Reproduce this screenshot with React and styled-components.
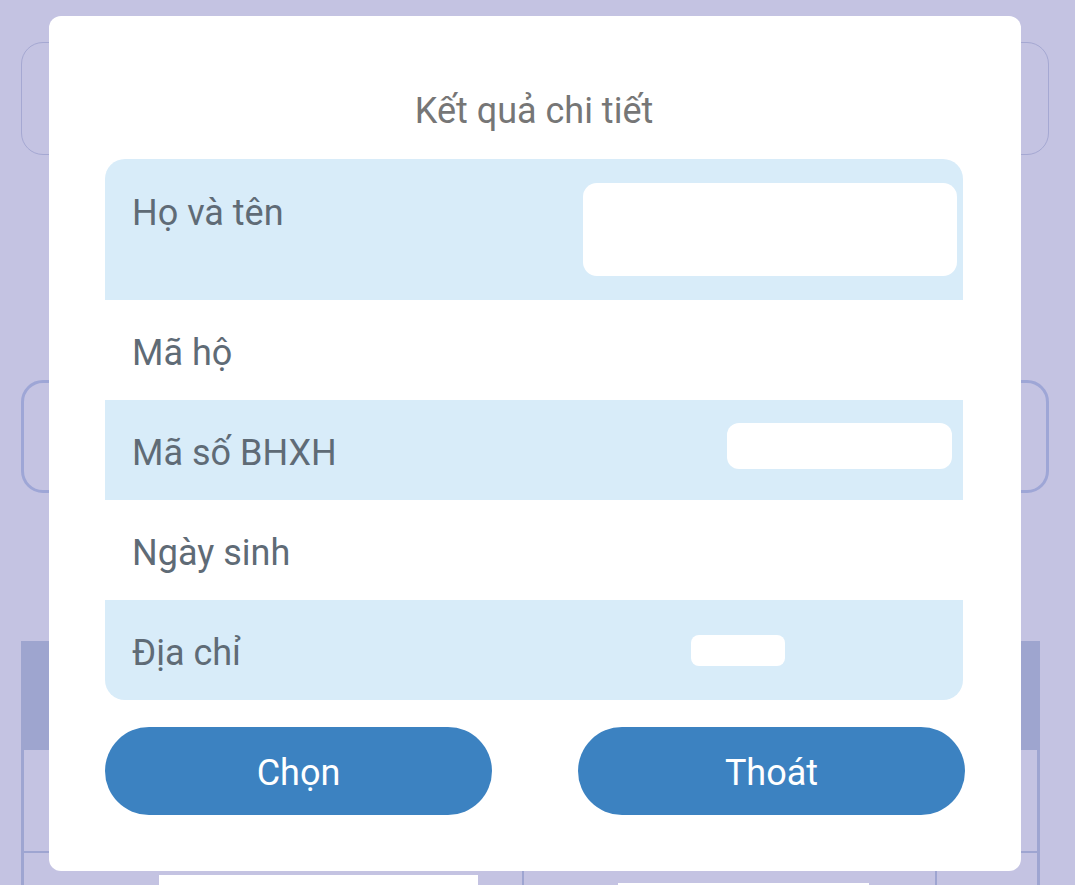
import React from "react";
import styled, { createGlobalStyle } from "styled-components";

const GlobalStyle = createGlobalStyle`
  html, body {
    margin: 0;
    padding: 0;
    background: #c4c3e2;
    font-family: Roboto, "Noto Sans", "Liberation Sans", sans-serif;
  }
  #root { position: relative; min-height: 885px; overflow: hidden; }
`;

const Backdrop = styled.div`
  display: flex;
  flex-direction: column;
  padding: 42px 26px 0 21px;
  height: 885px;
  box-sizing: border-box;
`;

const InfoCard = styled.div`
  flex-shrink: 0;
  height: 113px;
  box-sizing: border-box;
  border: ${(p) => (p.$thick ? "3px solid #9ea6d6" : "1px solid #a5a8d2")};
  border-radius: 22px;
  margin-bottom: ${(p) => p.$after}px;
`;

const BgTable = styled.div`
  flex-shrink: 0;
  display: flex;
  flex-direction: column;
  width: 1019px;
`;

const BgHead = styled.div`
  flex-shrink: 0;
  height: 109px;
  background: #9ea5cf;
`;

const BgRow = styled.div`
  flex-shrink: 0;
  display: grid;
  grid-template-columns: 500px 413px 1fr;
  height: ${(p) => p.$h}px;
  box-sizing: border-box;
  border-left: 3px solid #9ea5d1;
  border-right: 3px solid #9ea5d1;
  border-bottom: 2px solid #9ea5d1;
`;

const BgCell = styled.div`
  border-right: ${(p) => (p.$last ? "none" : "2px solid #9ea5d1")};
  padding: ${(p) => p.$pad || 0};
  box-sizing: border-box;
`;

const BgInput = styled.div`
  background: #fff;
  height: 40px;
  width: ${(p) => p.$w}px;
`;

const Modal = styled.div`
  position: absolute;
  top: 16px;
  left: 49px;
  width: 972px;
  height: 855px;
  box-sizing: border-box;
  background: #fff;
  border-radius: 12px;
  padding: 75px 58px 56px 56px;
  display: flex;
  flex-direction: column;
`;

const Title = styled.div`
  height: 40px;
  line-height: 40px;
  text-align: center;
  font-size: 36px;
  color: #767676;
  margin-bottom: 28px;
`;

const Table = styled.div`
  border-radius: 20px;
  overflow: hidden;
  display: flex;
  flex-direction: column;
`;

const Row = styled.div`
  display: flex;
  align-items: ${(p) => (p.$top ? "flex-start" : "center")};
  height: ${(p) => p.$h}px;
  background: ${(p) => (p.$shade ? "#d8ecf9" : "#ffffff")};
  padding: ${(p) => (p.$top ? "24px 6px 0 27px" : "0 0 0 27px")};
  box-sizing: border-box;
`;

const Label = styled.div`
  font-size: 36px;
  line-height: 42px;
  color: #5f6b76;
  margin-top: ${(p) => p.$mt || 0}px;
  padding-top: 6px;
  white-space: nowrap;
`;

const ValueBox = styled.div`
  margin-left: auto;
  width: ${(p) => p.$w}px;
  height: ${(p) => p.$h}px;
  margin-right: ${(p) => p.$mr || 0}px;
  margin-top: ${(p) => p.$mt || 0}px;
  background: #fff;
  border-radius: ${(p) => p.$r}px;
`;

const Actions = styled.div`
  display: flex;
  justify-content: space-between;
  margin-top: 27px;
  margin-right: -2px;
`;

const Button = styled.button`
  width: 387px;
  height: 88px;
  border: none;
  border-radius: 44px;
  background: #3c82c1;
  color: #fff;
  font-family: Roboto, "Noto Sans", "Liberation Sans", sans-serif;
  font-size: 36px;
  padding: 4px 0 0;
  cursor: pointer;
`;

export default function App() {
  return (
    <>
      <GlobalStyle />
      <Backdrop>
        <InfoCard $after={225} />
        <InfoCard $thick $after={148} />
        <BgTable>
          <BgHead />
          <BgRow $h={103}>
            <BgCell />
            <BgCell />
            <BgCell $last />
          </BgRow>
          <BgRow $h={120}>
            <BgCell $pad="22px 0 0 135px">
              <BgInput $w={319} />
            </BgCell>
            <BgCell $pad="30px 0 0 94px">
              <BgInput $w={251} />
            </BgCell>
            <BgCell $last />
          </BgRow>
        </BgTable>
      </Backdrop>
      <Modal>
        <Title>Kết quả chi tiết</Title>
        <Table>
          <Row $shade $top $h={141}>
            <Label $mt={3}>Họ và tên</Label>
            <ValueBox $w={374} $h={93} $r={14} />
          </Row>
          <Row $h={100}>
            <Label>Mã hộ</Label>
          </Row>
          <Row $shade $h={100}>
            <Label>Mã số BHXH</Label>
            <ValueBox $w={225} $h={46} $r={12} $mr={11} $mt={-8} />
          </Row>
          <Row $h={100}>
            <Label>Ngày sinh</Label>
          </Row>
          <Row $shade $h={100}>
            <Label>Địa chỉ</Label>
            <ValueBox $w={94} $h={31} $r={8} $mr={178} />
          </Row>
        </Table>
        <Actions>
          <Button>Chọn</Button>
          <Button>Thoát</Button>
        </Actions>
      </Modal>
    </>
  );
}
